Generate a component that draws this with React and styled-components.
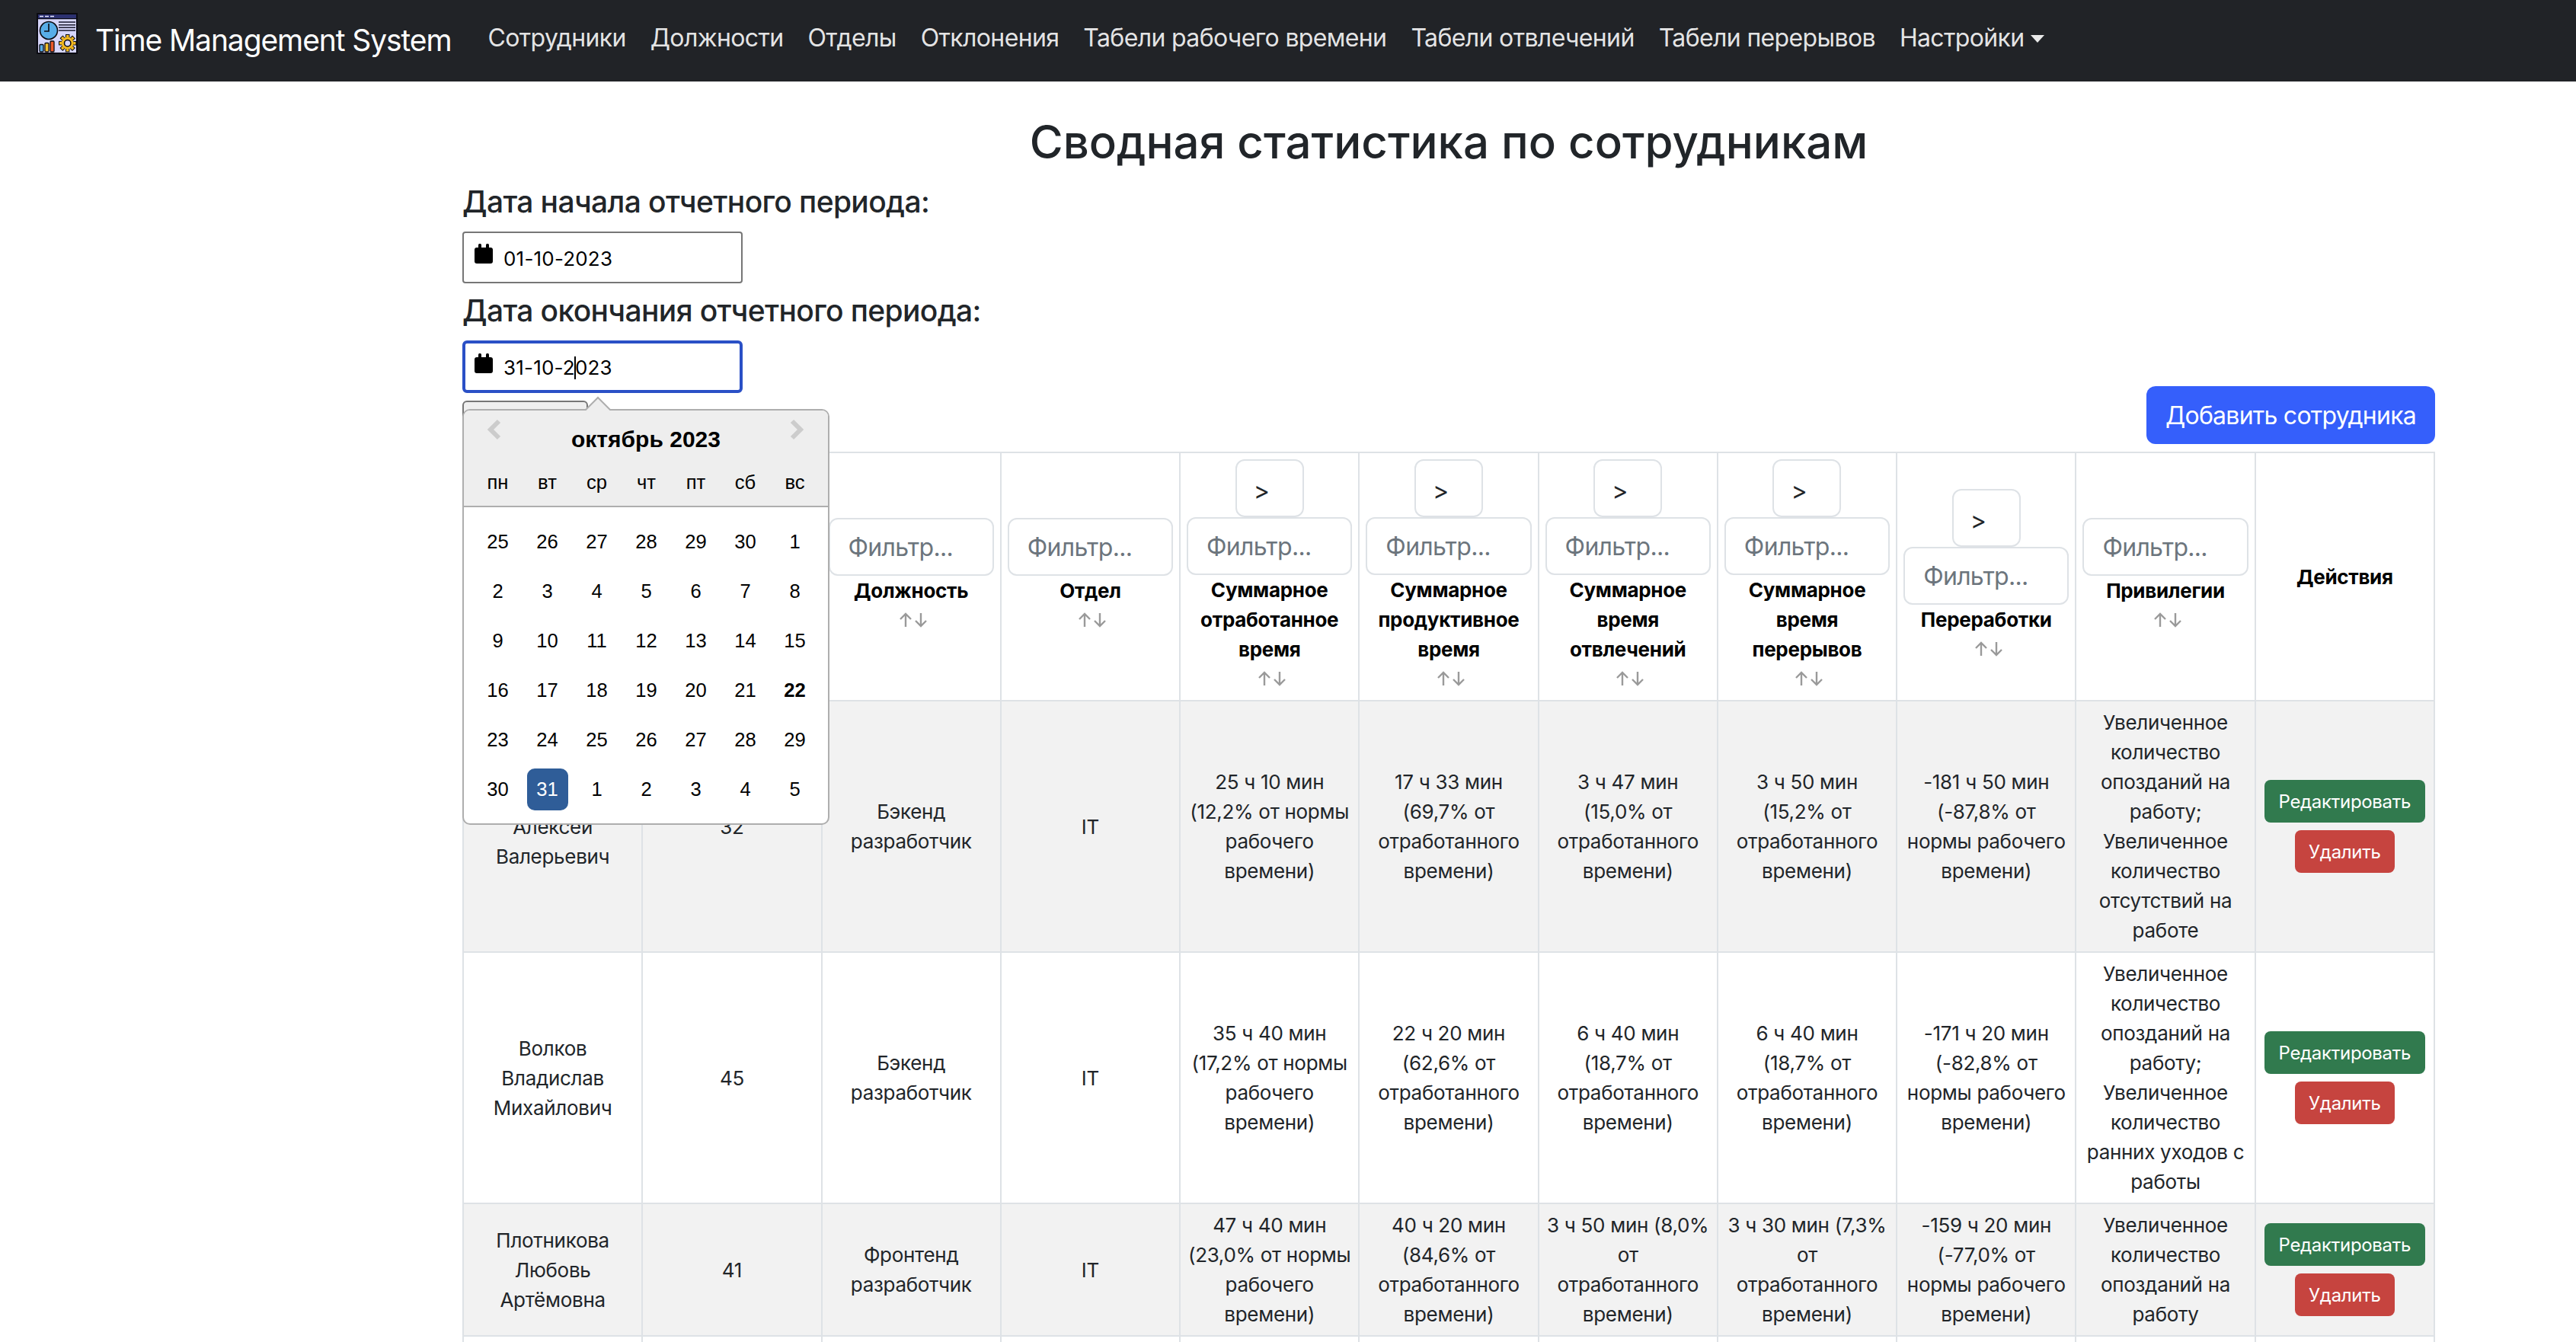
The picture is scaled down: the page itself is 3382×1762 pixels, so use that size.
import React from 'react';
import styled, { createGlobalStyle } from 'styled-components';

const Colors = {
  bar: '#212327',
  text: '#212529',
  line: '#dee2e6',
  stripe: '#f2f2f2',
  blue: '#355ffb',
  focus: '#2a50c6',
  green: '#317a4e',
  red: '#c6443f',
  calBorder: '#aeaeae',
  calHead: '#eeeeee',
  picked: '#2f5d98',
};

const uiFont = 'Inter, "Noto Sans", sans-serif';
const calFont = '"Liberation Sans", Arial, sans-serif';

const GlobalStyle = createGlobalStyle`
  html, body {
    margin: 0;
    padding: 0;
    height: 100%;
    overflow: hidden;
    background: #fff;
    color: ${Colors.text};
    font-family: ${uiFont};
  }
  * { box-sizing: border-box; }
`;

const Page = styled.div`
  height: 100vh;
  overflow: hidden;
`;

const Navbar = styled.nav`
  height: 107px;
  background: ${Colors.bar};
  display: flex;
  align-items: flex-start;
  padding: 17px 0 0 48px;
  color: #fff;
`;

const Brand = styled.div`
  display: flex;
  align-items: flex-start;
  gap: 23px;
  margin-right: 32px;
  font-size: 39px;
  line-height: 72px;
  letter-spacing: -1.1px;
`;

const NavList = styled.div`
  display: flex;
  align-items: center;
  height: 66px;
`;

const NavItem = styled.span`
  padding: 0 16px;
  font-size: 32px;
  line-height: 48px;
  white-space: nowrap;
  letter-spacing: -0.64px;
  color: rgba(255, 255, 255, 0.9);
`;

const DropCaret = styled.i`
  display: inline-block;
  margin-left: 8px;
  vertical-align: 5px;
  border-top: 10px solid rgba(255, 255, 255, 0.9);
  border-left: 9px solid transparent;
  border-right: 9px solid transparent;
`;

const Main = styled.main`
  padding: 0 185px 0 607px;
`;

const Title = styled.h2`
  margin: 0;
  padding-top: 42px;
  height: 131px;
  text-align: center;
  font-size: 60px;
  line-height: 74px;
  font-weight: 500;
`;

const FieldLabel = styled.div`
  font-size: 39px;
  line-height: 54px;
  height: 66px;
  font-weight: 500;
  letter-spacing: -0.65px;
`;

const PickerWrap = styled.div`
  position: relative;
  width: 368px;
  margin-bottom: ${p => p.$gap}px;
`;

const DateField = styled.div`
  width: 368px;
  height: ${p => (p.$focused ? 69 : 68)}px;
  display: flex;
  align-items: center;
  gap: 14px;
  padding-left: ${p => (p.$focused ? 12 : 14)}px;
  border: ${p => (p.$focused ? `4px solid ${Colors.focus}` : '2px solid #767676')};
  border-radius: ${p => (p.$focused ? 6 : 4)}px;
  font-size: 26px;
  letter-spacing: 0.2px;
  color: #000;
  background: #fff;
`;

const DateText = styled.span`
  padding-top: 2px;
`;

const FieldIcon = styled.svg`
  width: 24px;
  height: 26px;
  margin-bottom: 10px;
  flex: none;
`;

const Caret = styled.i`
  display: inline-block;
  width: 2px;
  height: 30px;
  margin: 0 -1px;
  background: #000;
  vertical-align: -6px;
`;

const Popup = styled.div`
  position: absolute;
  z-index: 5;
  top: 90px;
  left: 0;
  width: 482px;
  border: 2px solid ${Colors.calBorder};
  border-radius: 10px;
  background: #fff;
  font-family: ${calFont};
  color: #000;
`;

const PopupTip = styled.svg`
  position: absolute;
  top: -19px;
  left: 158px;
  width: 36px;
  height: 20px;
`;

const CalHead = styled.div`
  position: relative;
  background: ${Colors.calHead};
  border-bottom: 2px solid ${Colors.calBorder};
  border-radius: 8px 8px 0 0;
  padding: 16px 0 11px;
  text-align: center;
`;

const Chevron = styled.svg`
  position: absolute;
  top: 11px;
  ${p => (p.$right ? 'right: 31px;' : 'left: 30px;')}
  width: 20px;
  height: 28px;
`;

const MonthName = styled.div`
  font-size: 30px;
  line-height: 44px;
  font-weight: 700;
`;

const DayGrid = styled.div`
  display: grid;
  grid-template-columns: repeat(7, 65px);
  grid-auto-rows: ${p => p.$row}px;
  justify-items: center;
  align-items: center;
  margin: ${p => p.$margin};
  font-size: 25.6px;
`;

const DayCell = styled.span`
  width: 54px;
  height: 55px;
  display: flex;
  align-items: center;
  justify-content: center;
  border-radius: 10px;
  font-weight: ${p => (p.$today ? 700 : 400)};
  background: ${p => (p.$picked ? Colors.picked : 'transparent')};
  color: ${p => (p.$picked ? '#fff' : '#000')};
`;

const ToolRow = styled.div`
  display: flex;
  align-items: flex-end;
  justify-content: space-between;
  height: 67px;
  margin-bottom: 10px;
`;

const GhostButton = styled.button`
  width: 165px;
  height: 57px;
  flex: none;
  border: 2px solid #767676;
  border-radius: 6px;
  background: #efefef;
`;

const AddButton = styled.button`
  width: 379px;
  height: 76px;
  flex: none;
  border: none;
  border-radius: 12px;
  background: ${Colors.blue};
  color: #fff;
  font-family: ${uiFont};
  font-size: 32px;
  letter-spacing: -0.75px;
`;

const Table = styled.table`
  width: 2590px;
  table-layout: fixed;
  border-collapse: collapse;
  font-size: 26px;
  line-height: 39px;
`;

const HeadCell = styled.th`
  border: 2px solid ${Colors.line};
  padding: 8px;
  text-align: center;
  vertical-align: middle;
  font-weight: 700;
  letter-spacing: -0.3px;
  color: #000;
`;

const Cell = styled.td`
  border: 2px solid ${Colors.line};
  padding: 8px;
  text-align: center;
  vertical-align: middle;
  letter-spacing: -0.3px;
  white-space: pre-line;
`;

const Row = styled.tr`
  background: ${p => (p.$striped ? Colors.stripe : '#fff')};
`;

const ExpandButton = styled.button`
  display: block;
  width: 90px;
  height: 76px;
  margin: 0 auto;
  padding: 6px 0 0 22px;
  border: 2px solid ${Colors.line};
  border-radius: 12px;
  background: #fff;
  text-align: left;
  font-family: ${uiFont};
  font-size: 32px;
  color: ${Colors.text};
`;

const FilterInput = styled.input`
  display: block;
  width: 100%;
  height: 76px;
  padding: 12px 24px;
  border: 2px solid ${Colors.line};
  border-radius: 12px;
  background: #fff;
  font-family: ${uiFont};
  font-size: 32px;
  letter-spacing: -0.7px;
  &::placeholder { color: #6c757d; opacity: 1; }
`;

const SortIcon = styled.svg`
  display: block;
  width: 38px;
  height: 20px;
  margin: 9px auto 10px;
  transform: translateX(3px);
`;

const ActionStack = styled.div`
  display: flex;
  flex-direction: column;
  align-items: center;
  gap: 10px;
`;

const ActionButton = styled.button`
  height: 56px;
  padding: 0 18.5px;
  border: none;
  border-radius: 8px;
  background: ${p => p.$bg};
  color: #fff;
  font-family: ${uiFont};
  font-size: 24px;
  letter-spacing: -0.3px;
  white-space: nowrap;
`;

const BlankCell = styled.td`
  border: 2px solid ${Colors.line};
  height: 174px;
`;

const Logo = () => (
  <svg width="54" height="54" viewBox="0 0 54 54">
    <rect width="54" height="54" fill="#0b0b12" />
    <rect x="2" y="2" width="50" height="50" fill="#d6d6fb" />
    <rect x="2" y="2" width="50" height="5" fill="#2c3170" />
    <path d="M4 4.5h5M11 4.5h5M18 4.5h5" stroke="#e8e8ff" strokeWidth="1.6" />
    <rect x="2" y="7" width="50" height="1.2" fill="#0b0b12" />
    <circle cx="16" cy="23" r="11.5" fill="#58ade8" stroke="#0b0b12" strokeWidth="1.6" />
    <path d="M16 14v10h-6" fill="none" stroke="#0b0b12" strokeWidth="1.6" />
    <path d="M29 12h22M29 15.700h22M29 19.300h22M29 23h22" stroke="#1a1a2c" strokeWidth="1.5" />
    <rect x="4" y="41.500" width="5" height="9.500" rx="1" fill="#58ade8" stroke="#0b0b12" strokeWidth="1.300" />
    <rect x="11" y="39.500" width="5" height="11.500" rx="1" fill="#f5c02c" stroke="#0b0b12" strokeWidth="1.300" />
    <rect x="18" y="37" width="5" height="14" rx="1" fill="#ec5a2a" stroke="#0b0b12" strokeWidth="1.300" />
    {[0, 45, 90, 135, 180, 225, 270, 315].map(a => (
      <rect
        key={a}
        x="38.500"
        y="28.500"
        width="4.500"
        height="4"
        fill="#f5bb22"
        stroke="#0b0b12"
        strokeWidth="1"
        transform={`rotate(${a} 40.700 39.700)`}
      />
    ))}
    <circle cx="40.700" cy="39.700" r="7.500" fill="#f5bb22" stroke="#f5bb22" />
    <circle cx="40.700" cy="39.700" r="4.200" fill="#d6d6fb" stroke="#0b0b12" strokeWidth="1.500" />
  </svg>
);

const CalendarGlyph = () => (
  <FieldIcon viewBox="0 0 24 26">
    <rect x="0" y="5" width="24" height="21" rx="3" fill="#000" />
    <rect x="5" y="0" width="4" height="8" rx="1.500" fill="#000" />
    <rect x="15" y="0" width="4" height="8" rx="1.500" fill="#000" />
  </FieldIcon>
);

const SortArrows = () => (
  <SortIcon viewBox="0 0 38 20" fill="none" stroke="#9a9a9a" strokeWidth="2.400">
    <path d="M9 19V2M2 9l7-7 7 7" />
    <path d="M29 1v17M22 11l7 7 7-7" />
  </SortIcon>
);

const weeks = [
  [25, 26, 27, 28, 29, 30, 1],
  [2, 3, 4, 5, 6, 7, 8],
  [9, 10, 11, 12, 13, 14, 15],
  [16, 17, 18, 19, 20, 21, 22],
  [23, 24, 25, 26, 27, 28, 29],
  [30, 31, 1, 2, 3, 4, 5],
];

const Calendar = () => (
  <Popup>
    <PopupTip viewBox="0 0 36 20">
      <path d="M1 19L18 2l17 17" fill={Colors.calHead} stroke={Colors.calBorder} strokeWidth="2" />
    </PopupTip>
    <CalHead>
      <Chevron viewBox="0 0 20 28">
        <path d="M16 3L5 14l11 11" fill="none" stroke="#ccc" strokeWidth="6" />
      </Chevron>
      <Chevron $right viewBox="0 0 20 28">
        <path d="M4 3l11 11L4 25" fill="none" stroke="#ccc" strokeWidth="6" />
      </Chevron>
      <MonthName>октябрь 2023</MonthName>
      <DayGrid $row={40} $margin="14px 0 0 12px">
        {['пн', 'вт', 'ср', 'чт', 'пт', 'сб', 'вс'].map(d => (
          <span key={d}>{d}</span>
        ))}
      </DayGrid>
    </CalHead>
    <DayGrid $row={65} $margin="12.500px 12px">
      {weeks.map((week, w) =>
        week.map((day, i) => (
          <DayCell key={`${w}-${i}`} $today={w === 3 && i === 6} $picked={w === 5 && i === 1}>
            {day}
          </DayCell>
        ))
      )}
    </DayGrid>
  </Popup>
);

// the first two headers sit fully under the open calendar
const columns = [
  { id: 'name' },
  { id: 'age' },
  { id: 'position', title: 'Должность', filter: true },
  { id: 'dept', title: 'Отдел', filter: true },
  { id: 'worked', title: 'Суммарное отработанное время', filter: true, expand: true },
  { id: 'productive', title: 'Суммарное продуктивное время', filter: true, expand: true },
  { id: 'distract', title: 'Суммарное время отвлечений', filter: true, expand: true },
  { id: 'breaks', title: 'Суммарное время перерывов', filter: true, expand: true },
  { id: 'overtime', title: 'Переработки', filter: true, expand: true },
  { id: 'perks', title: 'Привилегии', filter: true },
  { id: 'actions', title: 'Действия' },
];

const rows = [
  [
    '\u00a0\nАлексей\nВалерьевич',
    '32',
    'Бэкенд разработчик',
    'IT',
    '25 ч 10 мин (12,2% от нормы рабочего времени)',
    '17 ч 33 мин (69,7% от отработанного времени)',
    '3 ч 47 мин (15,0% от отработанного времени)',
    '3 ч 50 мин (15,2% от отработанного времени)',
    '-181 ч 50 мин (-87,8% от нормы рабочего времени)',
    'Увеличенное количество опозданий на работу; Увеличенное количество отсутствий на работе',
  ],
  [
    'Волков Владислав Михайлович',
    '45',
    'Бэкенд разработчик',
    'IT',
    '35 ч 40 мин (17,2% от нормы рабочего времени)',
    '22 ч 20 мин (62,6% от отработанного времени)',
    '6 ч 40 мин (18,7% от отработанного времени)',
    '6 ч 40 мин (18,7% от отработанного времени)',
    '-171 ч 20 мин (-82,8% от нормы рабочего времени)',
    'Увеличенное количество опозданий на работу; Увеличенное количество ранних уходов с работы',
  ],
  [
    'Плотникова Любовь Артёмовна',
    '41',
    'Фронтенд разработчик',
    'IT',
    '47 ч 40 мин (23,0% от нормы рабочего времени)',
    '40 ч 20 мин (84,6% от отработанного времени)',
    '3 ч 50 мин (8,0% от отработанного времени)',
    '3 ч 30 мин (7,3% от отработанного времени)',
    '-159 ч 20 мин (-77,0% от нормы рабочего времени)',
    'Увеличенное количество опозданий на работу',
  ],
];

const navItems = [
  'Сотрудники',
  'Должности',
  'Отделы',
  'Отклонения',
  'Табели рабочего времени',
  'Табели отвлечений',
  'Табели перерывов',
];

export default function App() {
  return (
    <Page>
      <GlobalStyle />
      <Navbar>
        <Brand>
          <Logo />
          Time Management System
        </Brand>
        <NavList>
          {navItems.map(item => (
            <NavItem key={item}>{item}</NavItem>
          ))}
          <NavItem>
            Настройки
            <DropCaret />
          </NavItem>
        </NavList>
      </Navbar>
      <Main>
        <Title>Сводная статистика по сотрудникам</Title>
        <FieldLabel>Дата начала отчетного периода:</FieldLabel>
        <PickerWrap $gap={9}>
          <DateField>
            <CalendarGlyph />
            <DateText>01-10-2023</DateText>
          </DateField>
        </PickerWrap>
        <FieldLabel>Дата окончания отчетного периода:</FieldLabel>
        <PickerWrap $gap={0}>
          <DateField $focused>
            <CalendarGlyph />
            <DateText>
              31-10-2
              <Caret />
              023
            </DateText>
          </DateField>
          <Calendar />
        </PickerWrap>
        <ToolRow>
          <GhostButton />
          <AddButton>Добавить сотрудника</AddButton>
        </ToolRow>
        <Table>
          <thead>
            <tr>
              {columns.map(col => (
                <HeadCell key={col.id}>
                  {col.expand && <ExpandButton>&gt;</ExpandButton>}
                  {col.filter && <FilterInput placeholder="Фильтр..." />}
                  {col.title}
                  {col.filter && <SortArrows />}
                </HeadCell>
              ))}
            </tr>
          </thead>
          <tbody>
            {rows.map((row, r) => (
              <Row key={row[0]} $striped={r % 2 === 0}>
                {row.map((value, c) => (
                  <Cell key={c}>{value}</Cell>
                ))}
                <Cell>
                  <ActionStack>
                    <ActionButton $bg={Colors.green}>Редактировать</ActionButton>
                    <ActionButton $bg={Colors.red}>Удалить</ActionButton>
                  </ActionStack>
                </Cell>
              </Row>
            ))}
            <Row>
              {columns.map(col => (
                <BlankCell key={col.id} />
              ))}
            </Row>
          </tbody>
        </Table>
      </Main>
    </Page>
  );
}
